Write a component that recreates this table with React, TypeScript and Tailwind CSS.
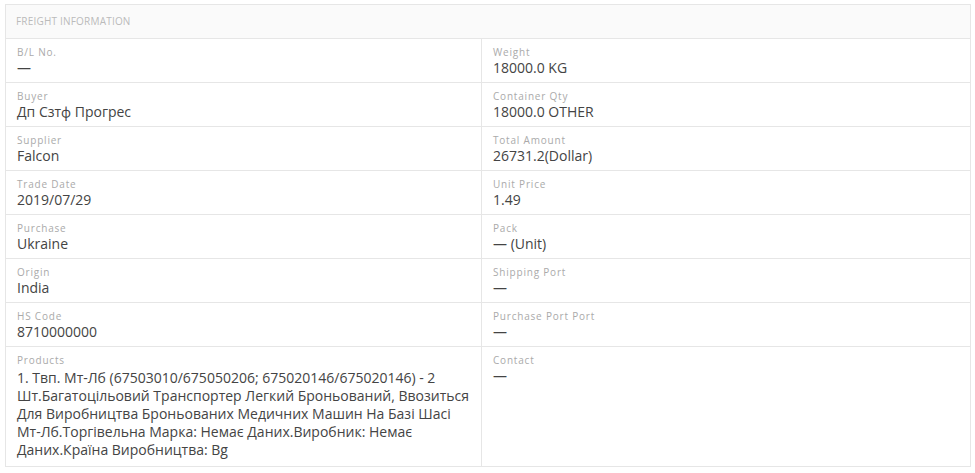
const rows: { label: string; value: string }[][] = [
  [
    { label: "B/L No.", value: "—" },
    { label: "Weight", value: "18000.0 KG" },
  ],
  [
    { label: "Buyer", value: "Дп Сзтф Прогрес" },
    { label: "Container Qty", value: "18000.0 OTHER" },
  ],
  [
    { label: "Supplier", value: "Falcon" },
    { label: "Total Amount", value: "26731.2(Dollar)" },
  ],
  [
    { label: "Trade Date", value: "2019/07/29" },
    { label: "Unit Price", value: "1.49" },
  ],
  [
    { label: "Purchase", value: "Ukraine" },
    { label: "Pack", value: "— (Unit)" },
  ],
  [
    { label: "Origin", value: "India" },
    { label: "Shipping Port", value: "—" },
  ],
  [
    { label: "HS Code", value: "8710000000" },
    { label: "Purchase Port Port", value: "—" },
  ],
  [
    {
      label: "Products",
      value:
        "1. Твп. Мт-Лб (67503010/675050206; 675020146/675020146) - 2 Шт.Багатоцільовий Транспортер Легкий Броньований, Ввозиться Для Виробництва Броньованих Медичних Машин На Базі Шасі Мт-Лб.Торгівельна Марка: Немає Даних.Виробник: Немає Даних.Країна Виробництва: Bg",
    },
    { label: "Contact", value: "—" },
  ],
];

function Cell({ label, value, last }: { label: string; value: string; last?: boolean }) {
  return (
    <div className={`px-[11px] pt-[6px] ${last ? "pb-[7px]" : "pb-[5px]"}`}>
      <p className="text-[10px] leading-[14px] tracking-[0.08em] text-[#aaa]">{label}</p>
      <p className={`text-[14px] leading-[18px] text-[#444] ${last ? "mt-[2px]" : ""}`}>{value}</p>
    </div>
  );
}

export default function App() {
  return (
    <div className="min-h-[473px] bg-white pl-[5px] pt-[4px]" style={{ fontFamily: '"Open Sans", sans-serif' }}>
      <div className="w-[966px] border border-[#e6e6e6]">
        <div className="flex h-[34px] items-center border-b border-[#e6e6e6] bg-[#fafafa] px-[10px]">
          <h2 className="text-[10px] uppercase tracking-[0.02em] text-[#bbb]">Freight Information</h2>
        </div>
        {rows.map((row, i) => (
          <div
            key={i}
            className={`grid grid-cols-[476px_1fr] ${i < rows.length - 1 ? "border-b border-[#e6e6e6]" : ""}`}
          >
            <div className="border-r border-[#e6e6e6]">
              <Cell label={row[0].label} value={row[0].value} last={i === rows.length - 1} />
            </div>
            <Cell label={row[1].label} value={row[1].value} />
          </div>
        ))}
      </div>
    </div>
  );
}
